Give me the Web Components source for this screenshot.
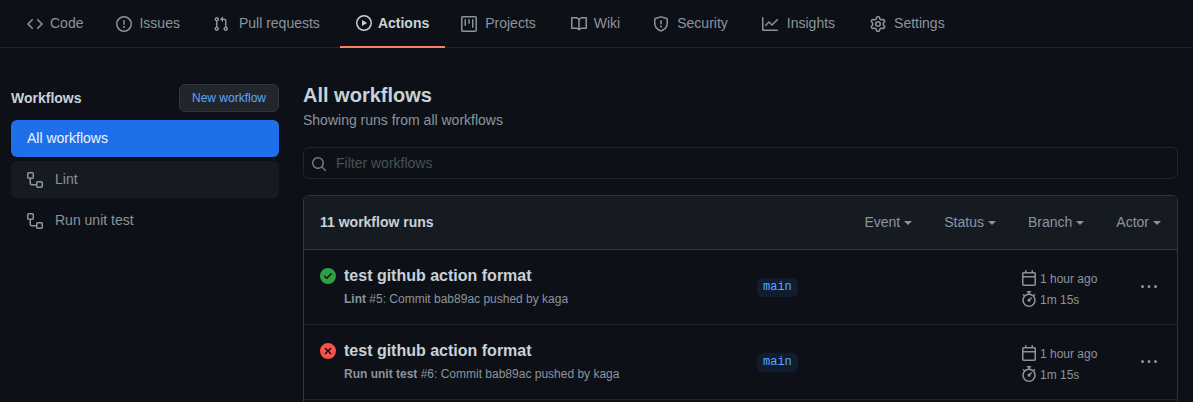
<!DOCTYPE html>
<html lang="en">
<head>
<meta charset="utf-8">
<title>Actions</title>
<style>
  html, body { margin: 0; height: 402px; overflow: hidden; }
  body {
    background: #0d1117;
    color: #c9d1d9;
    font: 14px/21px "Liberation Sans", Arial, sans-serif;
  }
</style>
</head>
<body>
<repo-tabs>
  <repo-tab icon="code">Code</repo-tab>
  <repo-tab icon="issue">Issues</repo-tab>
  <repo-tab icon="pull" style="--gap:10px;--after:0px">Pull requests</repo-tab>
  <repo-tab icon="play" active>Actions</repo-tab>
  <repo-tab icon="project" style="--gap:8px;--after:3px">Projects</repo-tab>
  <repo-tab icon="book">Wiki</repo-tab>
  <repo-tab icon="shield" style="--gap:8px;--after:2px">Security</repo-tab>
  <repo-tab icon="graph" style="--gap:9px;--after:3px">Insights</repo-tab>
  <repo-tab icon="gear" style="--gap:8px">Settings</repo-tab>
</repo-tabs>
<actions-page>
  <workflow-sidebar slot="sidebar">
    <sidebar-item active>All workflows</sidebar-item>
    <sidebar-item icon="workflow" hover>Lint</sidebar-item>
    <sidebar-item icon="workflow">Run unit test</sidebar-item>
  </workflow-sidebar>
  <page-heading></page-heading>
  <filter-input placeholder="Filter workflows"></filter-input>
  <runs-table count="11 workflow runs">
    <run-row state="success" title="test github action format" workflow="Lint" info="#5: Commit bab89ac pushed by kaga" branch="main" when="1 hour ago" took="1m 15s"></run-row>
    <run-row state="failure" title="test github action format" workflow="Run unit test" info="#6: Commit bab89ac pushed by kaga" branch="main" when="1 hour ago" took="1m 15s"></run-row>
    <run-row></run-row>
  </runs-table>
</actions-page>

<script>
const ICONS = {
  code: "M4.72 3.22a.75.75 0 011.06 1.06L2.06 8l3.72 3.72a.75.75 0 11-1.06 1.06L.47 8.53a.75.75 0 010-1.06l4.25-4.25zm6.56 0a.75.75 0 10-1.06 1.06L13.94 8l-3.72 3.72a.75.75 0 101.06 1.06l4.25-4.25a.75.75 0 000-1.06l-4.25-4.25z",
  issue: "M8 1.5a6.5 6.5 0 100 13 6.5 6.5 0 000-13zM0 8a8 8 0 1116 0A8 8 0 010 8zm9 3a1 1 0 11-2 0 1 1 0 012 0zm-.25-6.25a.75.75 0 00-1.5 0v3.5a.75.75 0 001.5 0v-3.5z",
  pull: "M7.177 3.073L9.573.677A.25.25 0 0110 .854v4.792a.25.25 0 01-.427.177L7.177 3.427a.25.25 0 010-.354zM3.75 2.5a.75.75 0 100 1.5.75.75 0 000-1.5zm-2.25.75a2.25 2.25 0 113 2.122v5.256a2.251 2.251 0 11-1.5 0V5.372A2.25 2.25 0 011.5 3.25zM11 2.5h-1V4h1a1 1 0 011 1v5.628a2.251 2.251 0 101.5 0V5A2.5 2.5 0 0011 2.5zm1 10.25a.75.75 0 111.5 0 .75.75 0 01-1.5 0zM3.75 12a.75.75 0 100 1.5.75.75 0 000-1.5z",
  play: "M1.5 8a6.5 6.5 0 1113 0 6.5 6.5 0 01-13 0zM8 0a8 8 0 100 16A8 8 0 008 0zM6.379 5.227A.25.25 0 006 5.442v5.117a.25.25 0 00.379.214l4.264-2.559a.25.25 0 000-.428L6.379 5.227z",
  project: "M1.75 0A1.75 1.75 0 000 1.75v12.5C0 15.216.784 16 1.75 16h12.5A1.75 1.75 0 0016 14.25V1.75A1.75 1.75 0 0014.25 0H1.75zM1.5 1.75a.25.25 0 01.25-.25h12.5a.25.25 0 01.25.25v12.5a.25.25 0 01-.25.25H1.75a.25.25 0 01-.25-.25V1.75zM11.75 3a.75.75 0 00-.75.75v7.5a.75.75 0 001.5 0v-7.5a.75.75 0 00-.75-.75zm-8.25.75a.75.75 0 011.5 0v5.5a.75.75 0 01-1.5 0v-5.5zM8 3a.75.75 0 00-.75.75v3.5a.75.75 0 001.5 0v-3.5A.75.75 0 008 3z",
  book: "M0 1.75A.75.75 0 01.75 1h4.253c1.227 0 2.317.59 3 1.501A3.744 3.744 0 0111.006 1h4.245a.75.75 0 01.75.75v10.5a.75.75 0 01-.75.75h-4.507a2.25 2.25 0 00-1.591.659l-.622.621a.75.75 0 01-1.06 0l-.622-.621A2.25 2.25 0 005.258 13H.75a.75.75 0 01-.75-.75V1.75zm8.755 3a2.25 2.25 0 012.25-2.25H14.5v9h-3.757c-.71 0-1.4.201-1.992.572l.004-7.322zm-1.504 7.324l.004-5.073-.002-2.253A2.25 2.25 0 005.003 2.5H1.5v9h3.757a3.75 3.75 0 011.994.574z",
  shield: "M7.467.133a1.75 1.75 0 011.066 0l5.25 1.68A1.75 1.75 0 0115 3.48V7c0 1.566-.32 3.182-1.303 4.682-.983 1.498-2.585 2.813-5.032 3.855a1.7 1.7 0 01-1.33 0c-2.447-1.042-4.049-2.357-5.032-3.855C1.32 10.182 1 8.566 1 7V3.48a1.75 1.75 0 011.217-1.667l5.25-1.68zm.61 1.429a.25.25 0 00-.153 0l-5.25 1.68a.25.25 0 00-.174.238V7c0 1.358.275 2.666 1.057 3.86.784 1.194 2.121 2.34 4.366 3.297a.2.2 0 00.154 0c2.245-.956 3.582-2.104 4.366-3.298C13.225 9.666 13.5 8.36 13.5 7V3.48a.25.25 0 00-.174-.237l-5.25-1.68zM9 10.5a1 1 0 11-2 0 1 1 0 012 0zm-.25-5.75a.75.75 0 10-1.5 0v3a.75.75 0 001.5 0v-3z",
  graph: "M1.5 1.75a.75.75 0 00-1.5 0v12.5c0 .414.336.75.75.75h14.5a.75.75 0 000-1.5H1.5V1.75zm14.28 2.53a.75.75 0 00-1.06-1.06L10 7.94 7.53 5.47a.75.75 0 00-1.06 0L3.22 8.72a.75.75 0 001.06 1.06L7 7.06l2.47 2.47a.75.75 0 001.06 0l5.25-5.25z",
  gear: "M7.429 1.525a6.593 6.593 0 011.142 0c.036.003.108.036.137.146l.289 1.105c.147.56.55.967.997 1.189.174.086.341.183.501.29.417.278.97.423 1.53.27l1.102-.303c.11-.03.175.016.195.046.219.31.41.641.573.989.014.031.022.11-.059.19l-.815.806c-.411.406-.562.957-.53 1.456a4.588 4.588 0 010 .582c-.032.499.119 1.05.53 1.456l.815.806c.08.08.073.159.059.19a6.494 6.494 0 01-.573.99c-.02.029-.086.074-.195.045l-1.103-.303c-.559-.153-1.112-.008-1.529.27-.16.107-.327.204-.5.29-.449.222-.851.628-.998 1.189l-.289 1.105c-.029.11-.101.143-.137.146a6.613 6.613 0 01-1.142 0c-.036-.003-.108-.037-.137-.146l-.289-1.105c-.147-.56-.55-.967-.997-1.189a4.502 4.502 0 01-.501-.29c-.417-.278-.97-.423-1.53-.27l-1.102.303c-.11.03-.175-.016-.195-.046a6.492 6.492 0 01-.573-.989c-.014-.031-.022-.11.059-.19l.815-.806c.411-.406.562-.957.53-1.456a4.587 4.587 0 010-.582c.032-.499-.119-1.05-.53-1.456l-.815-.806c-.08-.08-.073-.159-.059-.19a6.44 6.44 0 01.573-.99c.02-.029.086-.075.195-.045l1.103.303c.559.153 1.112.008 1.529-.27.16-.107.327-.204.5-.29.449-.222.851-.628.998-1.189l.289-1.105c.029-.11.101-.143.137-.146zM8 0c-.236 0-.47.01-.701.03-.743.065-1.29.615-1.458 1.261l-.29 1.106c-.017.066-.078.158-.211.224a5.994 5.994 0 00-.668.386c-.123.082-.233.09-.3.071L3.27 2.776c-.644-.177-1.392.02-1.82.63a7.977 7.977 0 00-.704 1.217c-.315.675-.111 1.422.363 1.891l.815.806c.05.048.098.147.088.294a6.084 6.084 0 000 .772c.01.147-.038.246-.088.294l-.815.806c-.474.469-.678 1.216-.363 1.891.2.428.436.835.704 1.218.428.609 1.176.806 1.82.63l1.103-.303c.066-.019.176-.011.299.071.213.143.436.272.668.386.133.066.194.158.212.224l.289 1.106c.169.646.715 1.196 1.458 1.26a8.094 8.094 0 001.402 0c.743-.064 1.29-.614 1.458-1.26l.29-1.106c.017-.066.078-.158.211-.224a5.98 5.98 0 00.668-.386c.123-.082.233-.09.3-.071l1.102.302c.644.177 1.392-.02 1.82-.63.268-.382.505-.789.704-1.217.315-.675.111-1.422-.364-1.891l-.814-.806c-.05-.048-.098-.147-.088-.294a6.1 6.1 0 000-.772c-.01-.147.039-.246.088-.294l.814-.806c.475-.469.679-1.216.364-1.891a7.992 7.992 0 00-.704-1.218c-.428-.609-1.176-.806-1.82-.63l-1.103.303c-.066.019-.176.011-.299-.071a5.991 5.991 0 00-.668-.386c-.133-.066-.194-.158-.212-.224L10.16 1.29C9.99.645 9.444.095 8.701.031A8.094 8.094 0 008 0zm1.5 8a1.5 1.5 0 11-3 0 1.5 1.5 0 013 0zM11 8a3 3 0 11-6 0 3 3 0 016 0z",
  workflow: "M0 1.75C0 .784.784 0 1.75 0h3.5C6.216 0 7 .784 7 1.75v3.5A1.75 1.75 0 015.25 7H4v4a1 1 0 001 1h4v-1.25C9 9.784 9.784 9 10.75 9h3.5c.966 0 1.75.784 1.75 1.75v3.5A1.75 1.75 0 0114.25 16h-3.5A1.75 1.75 0 019 14.25V13.5H5A2.5 2.5 0 012.5 11V7h-.75A1.75 1.75 0 010 5.25v-3.5zm1.75-.25a.25.25 0 00-.25.25v3.5c0 .138.112.25.25.25h3.5a.25.25 0 00.25-.25v-3.5a.25.25 0 00-.25-.25h-3.5zm9 9a.25.25 0 00-.25.25v3.5c0 .138.112.25.25.25h3.5a.25.25 0 00.25-.25v-3.5a.25.25 0 00-.25-.25h-3.5z",
  search: "M11.5 7a4.499 4.499 0 11-8.998 0A4.499 4.499 0 0111.5 7zm-.82 4.74a6 6 0 111.06-1.06l3.04 3.04a.75.75 0 11-1.06 1.06l-3.04-3.04z",
  calendar: "M4.75 0a.75.75 0 01.75.75V2h5V.75a.75.75 0 011.5 0V2h1.25c.966 0 1.75.784 1.75 1.75v10.5A1.75 1.75 0 0113.25 16H2.75A1.75 1.75 0 011 14.25V3.75C1 2.784 1.784 2 2.75 2H4V.75A.75.75 0 014.75 0zm-2 3.5a.25.25 0 00-.25.25V6h11V3.75a.25.25 0 00-.25-.25H2.75zm-.25 4v6.75c0 .138.112.25.25.25h10.5a.25.25 0 00.25-.25V7.5h-11z",
  stopwatch: "M5.75.75A.75.75 0 016.5 0h3a.75.75 0 010 1.5h-.75v1l-.001.041a6.718 6.718 0 013.464 1.435l.007-.006.75-.75a.75.75 0 111.06 1.06l-.75.75-.006.007a6.75 6.75 0 11-10.548 0L2.72 5.03l-.75-.75a.75.75 0 011.06-1.06l.75.75.007.006A6.718 6.718 0 017.25 2.541a.756.756 0 010-.041v-1H6.5a.75.75 0 01-.75-.75zM8 14.5A5.25 5.25 0 108 4a5.25 5.25 0 000 10.5zm.389-6.7l1.33-1.33a.75.75 0 111.061 1.06L9.45 8.861A1.502 1.502 0 018 10.75a1.5 1.5 0 11.389-2.95z",
  kebab: "M8 9a1.5 1.5 0 100-3 1.5 1.5 0 000 3zM1.5 9a1.5 1.5 0 100-3 1.5 1.5 0 000 3zm13 0a1.5 1.5 0 100-3 1.5 1.5 0 000 3z",
  success: "M8 16A8 8 0 108 0a8 8 0 000 16zm3.78-9.72a.75.75 0 00-1.06-1.06L6.75 9.19 5.28 7.72a.75.75 0 00-1.06 1.06l2 2a.75.75 0 001.06 0l4.5-4.5z",
  failure: "M2.343 13.657A8 8 0 1113.657 2.343 8 8 0 012.343 13.657zM6.03 4.97a.75.75 0 00-1.06 1.06L6.94 8 4.97 9.97a.75.75 0 101.06 1.06L8 9.06l1.97 1.97a.75.75 0 101.06-1.06L9.06 8l1.97-1.97a.75.75 0 10-1.06-1.06L8 6.94 6.03 4.97z",
};

function octicon(name) {
  return `<svg width="16" height="16" viewBox="0 0 16 16" fill="currentColor" style="display:block;flex:none"><path fill-rule="evenodd" d="${ICONS[name]}"></path></svg>`;
}

class RepoTabs extends HTMLElement {
  constructor() {
    super();
    this.attachShadow({ mode: "open" });
    this.shadowRoot.innerHTML = `
      <style>
        :host {
          display: flex;
          height: 47px;
          padding-left: 11px;
          background: #0d1117;
          border-bottom: 1px solid #21262d;
        }
      </style>
      <slot></slot>
    `;
  }
}

class RepoTab extends HTMLElement {
  constructor() {
    super();
    this.attachShadow({ mode: "open" });
    this.shadowRoot.innerHTML = `
      <style>
        :host {
          display: flex;
          align-items: center;
          gap: var(--gap, 7px);
          padding: 0 16px;
          margin-right: var(--after, 1px);
          color: #8b949e;
          height: 47px;
          box-sizing: border-box;
        }
        :host([active]) {
          color: #c9d1d9;
          font-weight: 700;
          gap: 6px;
          margin-left: 4px;
          margin-right: 0;
          height: 48px;
          border-bottom: 2px solid #f78166;
        }
      </style>
      ${octicon(this.getAttribute("icon"))}
      <slot></slot>
    `;
  }
}

class ActionsPage extends HTMLElement {
  constructor() {
    super();
    this.attachShadow({ mode: "open" });
    this.shadowRoot.innerHTML = `
      <style>
        :host {
          display: grid;
          grid-template-columns: 268px 875px;
          gap: 24px;
          padding: 36px 0 0 11px;
        }
        .main { display: block; }
      </style>
      <slot name="sidebar"></slot>
      <div class="main"><slot></slot></div>
    `;
  }
}

class WorkflowSidebar extends HTMLElement {
  constructor() {
    super();
    this.attachShadow({ mode: "open" });
    this.shadowRoot.innerHTML = `
      <style>
        :host { display: block; }
        .head {
          display: flex;
          align-items: center;
          justify-content: space-between;
          margin-bottom: 8px;
        }
        h2 { margin: 0; font-size: 14px; font-weight: 700; color: #c9d1d9; }
        .new {
          box-sizing: border-box;
          height: 28px;
          padding: 0 12px;
          display: flex;
          align-items: center;
          font-size: 12px;
          color: #58a6ff;
          background: #21262d;
          border: 1px solid #30363d;
          border-radius: 6px;
        }
        .list { display: flex; flex-direction: column; gap: 4px; }
      </style>
      <div class="head">
        <h2>Workflows</h2>
        <div class="new">New workflow</div>
      </div>
      <div class="list"><slot></slot></div>
    `;
  }
}

class SidebarItem extends HTMLElement {
  constructor() {
    super();
    this.attachShadow({ mode: "open" });
    const icon = this.getAttribute("icon");
    this.shadowRoot.innerHTML = `
      <style>
        :host {
          display: flex;
          align-items: center;
          gap: 12px;
          height: 37px;
          padding: 0 16px;
          border-radius: 6px;
          color: #8b949e;
        }
        :host([active]) { background: #1f6feb; color: #f0f6fc; }
        :host([hover]) { background: #161b22; }
      </style>
      ${icon ? octicon(icon) : ""}
      <slot></slot>
    `;
  }
}

class PageHeading extends HTMLElement {
  constructor() {
    super();
    this.attachShadow({ mode: "open" });
    this.shadowRoot.innerHTML = `
      <style>
        :host { display: block; }
        h1 { margin: 0; font-size: 20px; line-height: 22px; font-weight: 700; color: #c9d1d9; }
        p { margin: 4px 0 0; font-size: 14px; line-height: 21px; color: #8b949e; }
      </style>
      <h1>All workflows</h1>
      <p>Showing runs from all workflows</p>
    `;
  }
}

class FilterInput extends HTMLElement {
  constructor() {
    super();
    this.attachShadow({ mode: "open" });
    this.shadowRoot.innerHTML = `
      <style>
        :host {
          display: flex;
          align-items: center;
          gap: 9px;
          box-sizing: border-box;
          height: 32px;
          margin: 16px 0;
          padding: 0 7px;
          background: #0d1117;
          border: 1px solid #21262d;
          border-radius: 6px;
          color: #484f58;
        }
        .icon { color: #6e7681; margin-top: 1px; }
      </style>
      <span class="icon">${octicon("search")}</span>
      <span>${this.getAttribute("placeholder")}</span>
    `;
  }
}

class RunsTable extends HTMLElement {
  constructor() {
    super();
    this.attachShadow({ mode: "open" });
    const filters = ["Event", "Status", "Branch", "Actor"]
      .map((name) => `<span class="filter">${name}<i></i></span>`)
      .join("");
    this.shadowRoot.innerHTML = `
      <style>
        :host {
          display: block;
          background: #0d1117;
          border: 1px solid #30363d;
          border-radius: 6px;
          overflow: hidden;
        }
        .head {
          display: flex;
          align-items: center;
          justify-content: space-between;
          height: 53px;
          padding: 0 16px;
          background: #161b22;
          border-bottom: 1px solid #30363d;
        }
        strong { font-weight: 700; color: #c9d1d9; }
        .filters { display: flex; gap: 32px; color: #8b949e; }
        .filter { display: flex; align-items: center; gap: 4px; }
        i {
          width: 0;
          height: 0;
          margin-top: 1px;
          border: 4px solid transparent;
          border-top-color: currentColor;
          border-bottom: 0;
        }
      </style>
      <div class="head">
        <strong>${this.getAttribute("count")}</strong>
        <div class="filters">${filters}</div>
      </div>
      <slot></slot>
    `;
  }
}

class RunRow extends HTMLElement {
  static styles = `
    <style>
      :host {
        display: block;
        border-bottom: 1px solid #21262d;
      }
      .row {
        box-sizing: border-box;
        height: 74px;
        padding: 0 16px;
        display: grid;
        grid-template-columns: 437px 264px 1fr auto;
        align-items: center;
      }
      .title { display: flex; gap: 8px; align-items: center; font-size: 16px; font-weight: 700; line-height: 24px; color: #c9d1d9; }
      .success { color: #2ea043; }
      .failure { color: #f85149; }
      .sub { margin: 2px 0 0 24px; font-size: 12px; line-height: 18px; color: #8b949e; }
      .sub b { font-weight: 700; }
      .main { margin-top: -2px; }
      .branch {
        justify-self: start;
        font: 12px/19px "Liberation Mono", monospace;
        color: #58a6ff;
        background: rgba(56, 139, 253, 0.1);
        border-radius: 6px;
        padding: 0 6px;
        margin-top: 1px;
      }
      .meta { display: flex; flex-direction: column; gap: 3px; font-size: 12px; line-height: 18px; color: #8b949e; margin-top: 5px; }
      .meta div { display: flex; align-items: center; gap: 3px; }
      .meta svg { margin-top: -2px; }
      .more { color: #8b949e; margin-right: 4px; }
    </style>
  `;

  get template() {
    const a = (name) => this.getAttribute(name) || "";
    if (!a("state")) return `${RunRow.styles}<div class="row"></div>`;
    return `
      ${RunRow.styles}
      <div class="row">
        <div class="main">
          <div class="title"><span class="${a("state")}">${octicon(a("state"))}</span>${a("title")}</div>
          <div class="sub"><b>${a("workflow")}</b> ${a("info")}</div>
        </div>
        <span class="branch">${a("branch")}</span>
        <div class="meta">
          <div>${octicon("calendar")}${a("when")}</div>
          <div>${octicon("stopwatch")}${a("took")}</div>
        </div>
        <span class="more">${octicon("kebab")}</span>
      </div>
    `;
  }

  constructor() {
    super();
    this.attachShadow({ mode: "open" });
  }

  connectedCallback() {
    this.shadowRoot.innerHTML = this.template;
  }
}

customElements.define("repo-tabs", RepoTabs);
customElements.define("repo-tab", RepoTab);
customElements.define("actions-page", ActionsPage);
customElements.define("workflow-sidebar", WorkflowSidebar);
customElements.define("sidebar-item", SidebarItem);
customElements.define("page-heading", PageHeading);
customElements.define("filter-input", FilterInput);
customElements.define("runs-table", RunsTable);
customElements.define("run-row", RunRow);
</script>
</body>
</html>
